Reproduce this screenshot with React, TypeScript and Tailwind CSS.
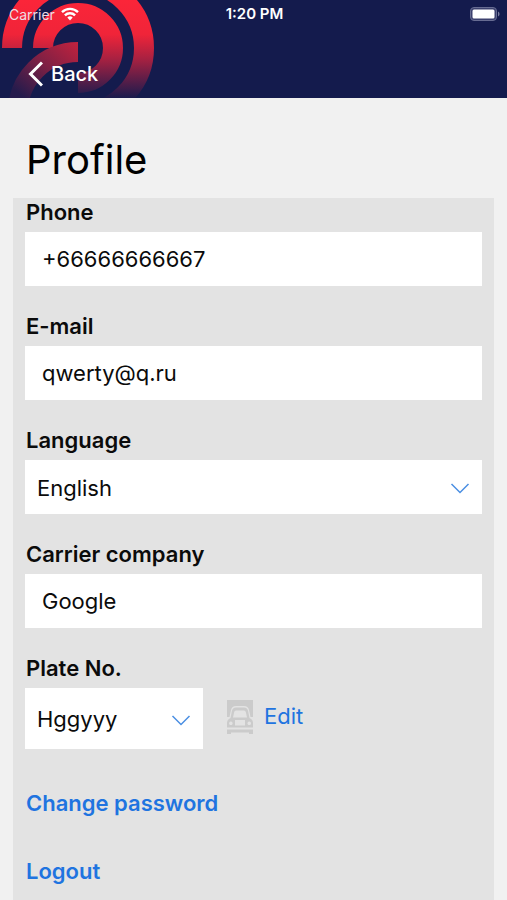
import { useState } from "react";
import type { ReactNode } from "react";

function Logo() {
  return (
    <svg
      className="absolute left-0 top-0"
      width="160"
      height="98"
      viewBox="0 0 160 98"
      fill="none"
      strokeWidth="20"
      aria-hidden="true"
    >
      <defs>
        <linearGradient id="fade" gradientUnits="userSpaceOnUse" x1="0" y1="0" x2="0" y2="98">
          <stop offset="0" stopColor="#fb2539" />
          <stop offset="0.35" stopColor="#f02439" />
          <stop offset="0.6" stopColor="#a82141" />
          <stop offset="0.85" stopColor="#4f1d49" />
          <stop offset="1" stopColor="#1a1b4d" />
        </linearGradient>
        <linearGradient id="sweep" gradientUnits="userSpaceOnUse" x1="78" y1="42" x2="30" y2="102">
          <stop offset="0" stopColor="#c3223e" />
          <stop offset="0.5" stopColor="#7e2044" />
          <stop offset="1" stopColor="#251b4c" />
        </linearGradient>
      </defs>
      <path d="M12 48A66 66 0 0 1 144 48A66 66 0 0 1 78 114" stroke="url(#fade)" />
      <path d="M43 48A35 35 0 0 1 113 48A35 35 0 0 1 78 83" stroke="url(#fade)" />
      <path d="M78 52A60 60 0 0 0 18 112" stroke="url(#sweep)" />
    </svg>
  );
}

function Wifi() {
  return (
    <svg width="18" height="14" viewBox="0 0 18 14" fill="none" stroke="#fff" strokeWidth="2.4" aria-hidden="true">
      <path d="M1 5.2A11.4 11.4 0 0 1 17 5.2" />
      <path d="M3.9 8.3A7.3 7.3 0 0 1 14.1 8.3" />
      <path d="M9 13.4L6.3 10.6A3.9 3.9 0 0 1 11.7 10.6Z" fill="#fff" stroke="none" />
    </svg>
  );
}

function Battery() {
  return (
    <svg width="30" height="14" viewBox="0 0 30 14" aria-hidden="true">
      <rect x="0.5" y="0.5" width="26" height="13" rx="3.5" fill="#3c416e" stroke="#676c92" />
      <rect x="2.5" y="2.5" width="22" height="9" rx="1.5" fill="#fff" />
      <path d="M28 4.6V9.4A2.6 2.6 0 0 0 28 4.6Z" fill="#777b9c" />
    </svg>
  );
}

function Chevron() {
  return (
    <svg
      className="pointer-events-none absolute right-3 top-1/2 -translate-y-1/3"
      width="20"
      height="12"
      viewBox="0 0 20 12"
      fill="none"
      stroke="#4a8fe2"
      strokeWidth="1.5"
      aria-hidden="true"
    >
      <path d="M1.5 1L10 9.5L18.5 1" />
    </svg>
  );
}

function Truck() {
  return (
    <svg width="28" height="36" viewBox="0 0 28 36" aria-hidden="true">
      <path d="M1 1H27V18H24.5L23 11Q22 7 18 7H10Q6 7 5 11L3.500 18H1Z" fill="#cbcbcb" />
      <path
        fillRule="evenodd"
        fill="#cbcbcb"
        d="M10 8.500H18Q21 8.500 22 11.500L23.500 19Q27 20.500 27 24V28.500H1V24Q1 20.500 4.500 19L6 11.500Q7 8.500 10 8.500ZM10 11.500Q8.500 11.500 8.200 13L7 18.500H21L19.800 13Q19.500 11.500 18 11.500ZM9 21V26.500H19V21ZM4.800 22.500A1.800 1.800 0 1 0 4.900 22.500ZM23.200 22.500A1.800 1.800 0 1 0 23.300 22.500Z"
      />
      <path d="M1 30.500H27V35H23V33.500H5V35H1Z" fill="#cbcbcb" />
    </svg>
  );
}

function Field({ id, label, children }: { id: string; label: string; children: ReactNode }) {
  return (
    <div className="flex flex-col gap-1.5">
      <label htmlFor={id} className="px-px text-[22px] leading-7 font-semibold">
        {label}
      </label>
      {children}
    </div>
  );
}

const inputStyle = "h-[54px] w-full rounded-none bg-white px-[17px] text-[22px] outline-none";
const selectStyle = "w-full appearance-none rounded-none bg-white pt-0.5 pl-3 pr-10 text-[22px] outline-none";

export default function App() {
  const [phone, setPhone] = useState("+66666666667");
  const [email, setEmail] = useState("qwerty@q.ru");
  const [company, setCompany] = useState("Google");

  return (
    <div className="flex min-h-screen flex-col bg-[#f1f1f1] font-['Inter',sans-serif] text-[#0b0b0b]">
      <header className="relative h-[98px] bg-[#141b4d] text-white">
        <Logo />
        <div className="relative grid h-7 grid-cols-3 items-center pl-[9px] pr-[7px] text-[14px]">
          <div className="flex items-center gap-[6px] text-[#f0dce4]">
            <span>Carrier</span>
            <Wifi />
          </div>
          <span className="text-center text-[15px] font-semibold">1:20 PM</span>
          <div className="flex justify-end">
            <Battery />
          </div>
        </div>
        <button type="button" className="relative mt-7 ml-7 flex h-9 items-center gap-2 text-[20px] font-medium">
          <svg width="15" height="26" viewBox="0 0 15 26" fill="none" stroke="#fff" strokeWidth="3" aria-hidden="true">
            <path d="M14 1.5L2.5 13L14 24.5" />
          </svg>
          Back
        </button>
      </header>

      <h1 className="px-[26px] pt-9 pb-3 text-[40px] leading-[52px] text-black">Profile</h1>

      <main className="mx-[13px] flex flex-1 flex-col bg-[#e3e3e3] px-3">
        <form className="flex flex-col gap-[26px]" onSubmit={(e) => e.preventDefault()}>
          <Field id="phone" label="Phone">
            <input id="phone" type="tel" className={inputStyle} value={phone} onChange={(e) => setPhone(e.target.value)} />
          </Field>
          <Field id="email" label="E-mail">
            <input id="email" type="email" className={inputStyle} value={email} onChange={(e) => setEmail(e.target.value)} />
          </Field>
          <Field id="language" label="Language">
            <div className="relative">
              <select id="language" className={`h-[54px] ${selectStyle}`}>
                <option>English</option>
              </select>
              <Chevron />
            </div>
          </Field>
          <Field id="company" label="Carrier company">
            <input id="company" type="text" className={inputStyle} value={company} onChange={(e) => setCompany(e.target.value)} />
          </Field>
          <Field id="plate" label="Plate No.">
            <div className="flex items-center gap-[23px]">
              <div className="relative w-[178px]">
                <select id="plate" className={`h-[61px] ${selectStyle}`}>
                  <option>Hggyyy</option>
                </select>
                <Chevron />
              </div>
              <button type="button" className="flex items-center gap-2.5 pb-1 text-[22px] text-[#1f74e0]">
                <Truck />
                Edit
              </button>
            </div>
          </Field>
        </form>
        <nav className="flex flex-col items-start gap-9 px-px pt-[38px] pb-3 text-[22px] leading-8 font-semibold text-[#1f74e0]">
          <a href="#password">Change password</a>
          <a href="#logout">Logout</a>
        </nav>
      </main>
    </div>
  );
}
